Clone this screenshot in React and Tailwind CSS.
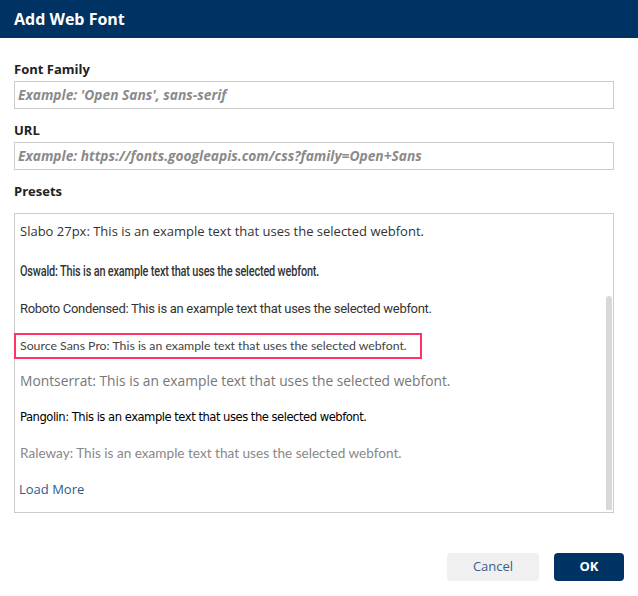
export default function App() {
  const presets = [
    { name: "Slabo 27px", cls: "font-['Open_Sans',sans-serif] text-[13px] text-[#333]", mb: "mb-[14px]" },
    { name: "Oswald", cls: "font-['Roboto',sans-serif] font-medium text-[13px] tracking-[-0.2px] text-[#333]", mb: "mb-[11px]", narrow: true },
    { name: "Roboto Condensed", cls: "font-['Roboto',sans-serif] text-[13px] tracking-[-0.3px] text-[#333]", mb: "mb-[11px]" },
    { name: "Source Sans Pro", cls: "font-['Lato',sans-serif] text-[12.3px] text-[#444]", mb: "mb-[9px]", selected: true },
    { name: "Montserrat", cls: "font-['Open_Sans',sans-serif] text-[13.8px] text-[#777]", mb: "mb-[11px]" },
    { name: "Pangolin", cls: "font-['DejaVu_Sans',sans-serif] text-[11.6px] tracking-[-0.5px] text-black", mb: "mb-[9px]" },
    { name: "Raleway", cls: "font-['Lato',sans-serif] text-[13.6px] text-[#888]", mb: "mb-[11px]" },
  ];

  return (
    <div className="w-[638px] h-[596px] bg-white flex flex-col font-['Open_Sans',sans-serif]">
      {/* HEADER */}
      <header className="h-[38px] bg-[#003263] flex items-center px-[14px]">
        <span className="text-white font-bold text-[16px]">Add Web Font</span>
      </header>

      {/* FORM */}
      <main className="flex-1 px-[14px] pt-[21px]">
        <label className="block text-[13px] font-bold text-[#222] leading-[20px]">Font Family</label>
        <div className="mt-[2px] w-[600px] h-[28px] border border-[#ccc] flex items-center px-[3px]">
          <span className="text-[13.75px] italic font-bold text-[#8a8a8a]">Example: 'Open Sans', sans-serif</span>
        </div>

        <label className="block mt-[11px] text-[13px] font-bold text-[#222] leading-[20px]">URL</label>
        <div className="mt-[2px] w-[600px] h-[28px] border border-[#ccc] flex items-center px-[3px]">
          <span className="text-[13.75px] italic font-bold text-[#8a8a8a]">
            Example: https://fonts.googleapis.com/css?family=Open+Sans
          </span>
        </div>

        <label className="block mt-[11px] text-[13px] font-bold text-[#222] leading-[20px]">Presets</label>
        <div className="mt-[12px] w-[600px] h-[300px] border border-[#ccc] flex">
          <div className="flex-1 flex flex-col items-start pt-[5px]">
            {presets.map((p) => (
              <div
                key={p.name}
                className={`-ml-px h-[26px] ${p.mb} flex items-center pl-[4px] pr-[13px] border-2 ${
                  p.selected ? "border-[#ff3366]" : "border-transparent"
                } ${p.cls}`}
              >
                <span className={p.narrow ? "inline-block origin-left scale-x-[0.84] scale-y-[1.1]" : ""}>
                  {p.name}: This is an example text that uses the selected webfont.
                </span>
              </div>
            ))}
            <div className="h-[26px] flex items-center pl-[4px] text-[13px] text-[#2d5b8c]">Load More</div>
          </div>
          <div className="w-[6px] mr-px pt-[82px] pb-[2px] flex">
            <div className="flex-1 bg-[#d8d8d8] rounded-t-[3px]" />
          </div>
        </div>
      </main>

      {/* FOOTER */}
      <footer className="flex justify-end gap-[15px] px-[14px] pb-[15px]">
        <button className="w-[92px] h-[28px] rounded-[4px] bg-[#f0f0f0] text-[13px] text-[#3a5f8a]">Cancel</button>
        <button className="w-[70px] h-[28px] rounded-[4px] bg-[#003263] text-[13px] font-bold text-white">OK</button>
      </footer>
    </div>
  );
}
